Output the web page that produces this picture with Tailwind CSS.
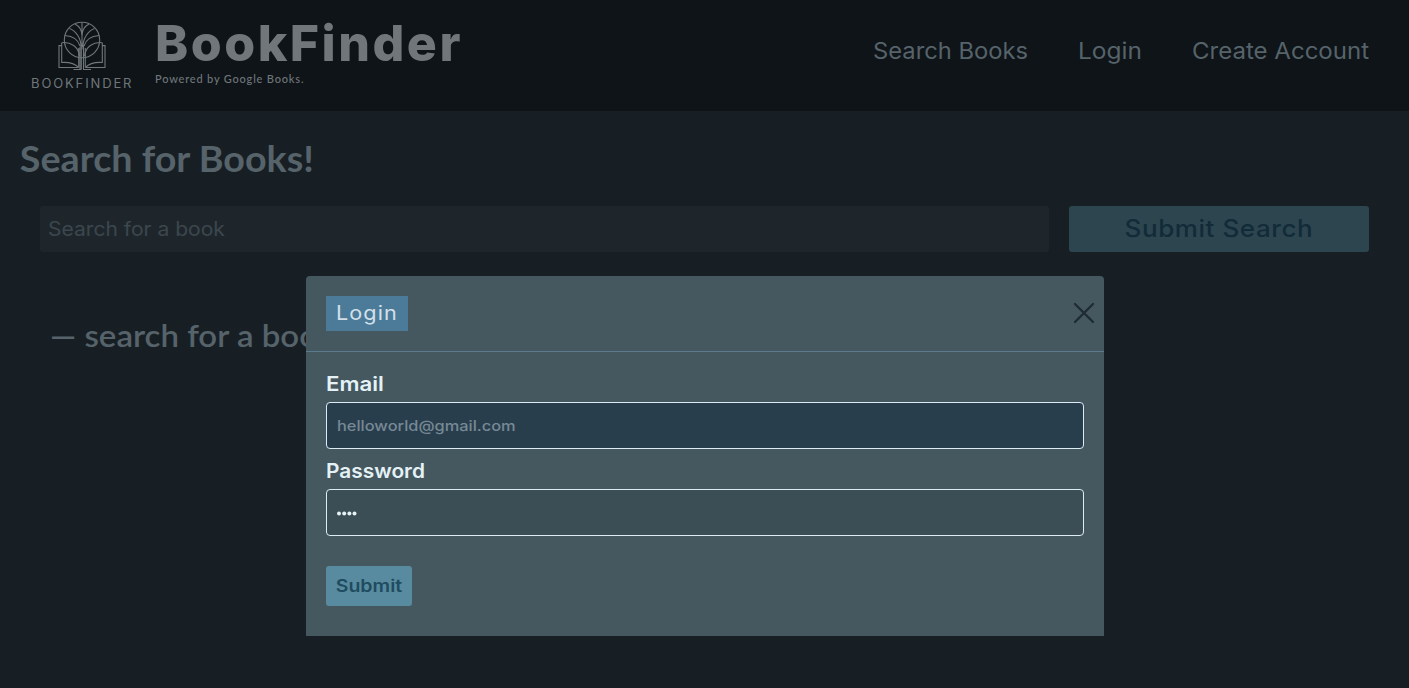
<!DOCTYPE html>
<html lang="en">
<head>
<meta charset="utf-8">
<title>BookFinder</title>
<script src="https://cdn.jsdelivr.net/npm/@tailwindcss/browser@4"></script>
</head>
<body class="relative h-[688px] overflow-hidden bg-[#171f25] font-['Inter',sans-serif] font-medium text-[#56636a]">
<header class="flex h-[111px] items-start justify-between bg-[#0e1418] pl-[31px] pr-10">
  <div class="flex">
    <div class="flex w-[102px] flex-col items-center pt-[21px] text-[#70767a]">
      <svg class="h-[51px] w-12" viewBox="0 0 48 51" fill="none" stroke="currentColor" stroke-width="1.1">
        <circle cx="24" cy="19" r="17.700"/>
        <path d="M24 1.500v27M24 15C24 9 21 5 17 3M24 15c0-6 3-10 7-12M23 26C23 17 18 10 11.500 7.500M25 26c0-9 5-16 11.500-18.500M22 25C20 18 14 15 7 14.500M26 25c2-7 8-10 15-10.500"/>
        <path d="M3.700 21.700c9-1 17 4 17.800 13.500M44.300 21.700c-9-1-17 4-17.800 13.500"/>
        <path d="M3.700 21.700v19.800c7-.500 13 1 17 5M3.700 24.600H1v21.900h19M44.300 21.700v19.800c-7-.500-13 1-17 5M44.300 24.600H47v21.900H28"/>
        <path d="M20.700 27v19.500M22 26v22M23.300 25v23M25.500 25v23M27.300 27v19.500M15.500 48.500h8M25 48.500h8"/>
      </svg>
      <div class="mt-[4px] w-[98px] origin-left -translate-x-[2px] scale-x-[1.040] whitespace-nowrap text-[12.500px] font-normal leading-[16px] tracking-[1.800px]">BOOKFINDER</div>
    </div>
    <div class="pl-[22px] pt-[16px]">
      <h1 class="whitespace-nowrap text-[50px] font-extrabold leading-[54px] tracking-[2.500px] text-[#70767a]">BookFinder</h1>
      <p class="mt-px font-['Lato',sans-serif] text-[11px] font-medium leading-4 tracking-[0.810px] text-[#70767a]">Powered by Google Books.</p>
    </div>
  </div>
  <nav class="flex gap-[50px] whitespace-nowrap pt-[35px] text-[22.500px] font-normal leading-8">
    <a class="w-[155px]"><span class="inline-block origin-left scale-x-[1.056]">Search Books</span></a>
    <a class="w-[64px]"><span class="inline-block origin-left scale-x-[1.088]">Login</span></a>
    <a class="w-[177px]"><span class="inline-block origin-left scale-x-[1.068]">Create Account</span></a>
  </nav>
</header>
<main>
  <h2 class="origin-left scale-x-[1.046] pl-[19px] pt-[25px] font-['Lato',sans-serif] text-[36px] font-bold leading-[44px]">Search for Books!</h2>
  <div class="flex gap-5 px-10 pt-[26px]">
    <div class="flex h-[46px] flex-1 items-center rounded-[3px] bg-[#1e262c] pl-2 pt-[2px] text-[19.500px] font-normal text-[#3c464d]"><span class="inline-block origin-left scale-x-[1.080]">Search for a book</span></div>
    <button class="h-[46px] w-[300px] rounded-[3px] bg-[#2d454f] text-[24px] font-medium tracking-[0.500px] text-[#122b39]"><span class="inline-block scale-x-[1.085]">Submit Search</span></button>
  </div>
  <p class="pl-[50px] pt-[65px] font-['Lato',sans-serif] text-[30px] font-semibold leading-[36px]"><span class="inline-block origin-left scale-x-[1.100]">— search for a book</span></p>
</main>
<section class="absolute left-[306px] top-[276px] h-[360px] w-[798px] rounded-t-[4px] bg-[#455860]">
  <div class="flex h-[76px] items-start justify-between border-b border-[#5b7a8e] pl-5 pr-[9px] pt-5">
    <div class="h-[35px] w-[82px] bg-[#4b7b99] pl-[10px] text-[20px] font-normal leading-[35px] tracking-[1px] text-[#d3e0ea]"><span class="inline-block origin-left scale-x-[1.080]">Login</span></div>
    <svg class="mt-[6px] h-[22px] w-[22px]" viewBox="0 0 22 22" stroke="#202c33" stroke-width="2.400" stroke-linecap="round"><path d="M2 2l18 18M20 2L2 20"/></svg>
  </div>
  <form class="px-5 pt-[18px] text-[#e4f1f5]">
    <label class="block text-[19.500px] font-semibold leading-7"><span class="inline-block origin-left scale-x-[1.140]">Email</span></label>
    <div class="mt-1 flex h-[47px] items-center rounded-[4px] border border-[#dcebf5] bg-[#293e4d] pl-[10px] text-[14.500px] text-[#778995]"><span class="inline-block origin-left scale-x-[1.130]">helloworld@gmail.com</span></div>
    <label class="mt-2 block text-[19.500px] font-semibold leading-7"><span class="inline-block origin-left scale-x-[1.070]">Password</span></label>
    <div class="mt-1 flex h-[47px] items-center rounded-[4px] border border-[#dcebf5] bg-[#3c4e55] pl-[10px] pt-[2px]">
      <svg class="h-4 w-5" viewBox="0 0 20 16" fill="#e4f1f5"><circle cx="2" cy="7.500" r="2"/><circle cx="7.200" cy="7.500" r="2"/><circle cx="12.400" cy="7.500" r="2"/><circle cx="17.500" cy="7.500" r="2"/></svg>
    </div>
    <button type="button" class="mt-[30px] block h-10 w-[86px] rounded-[3px] bg-[#588b9f] pt-[2px] text-[17px] font-semibold text-[#1f4c60]"><span class="inline-block scale-x-[1.150]">Submit</span></button>
  </form>
</section>
</body>
</html>
